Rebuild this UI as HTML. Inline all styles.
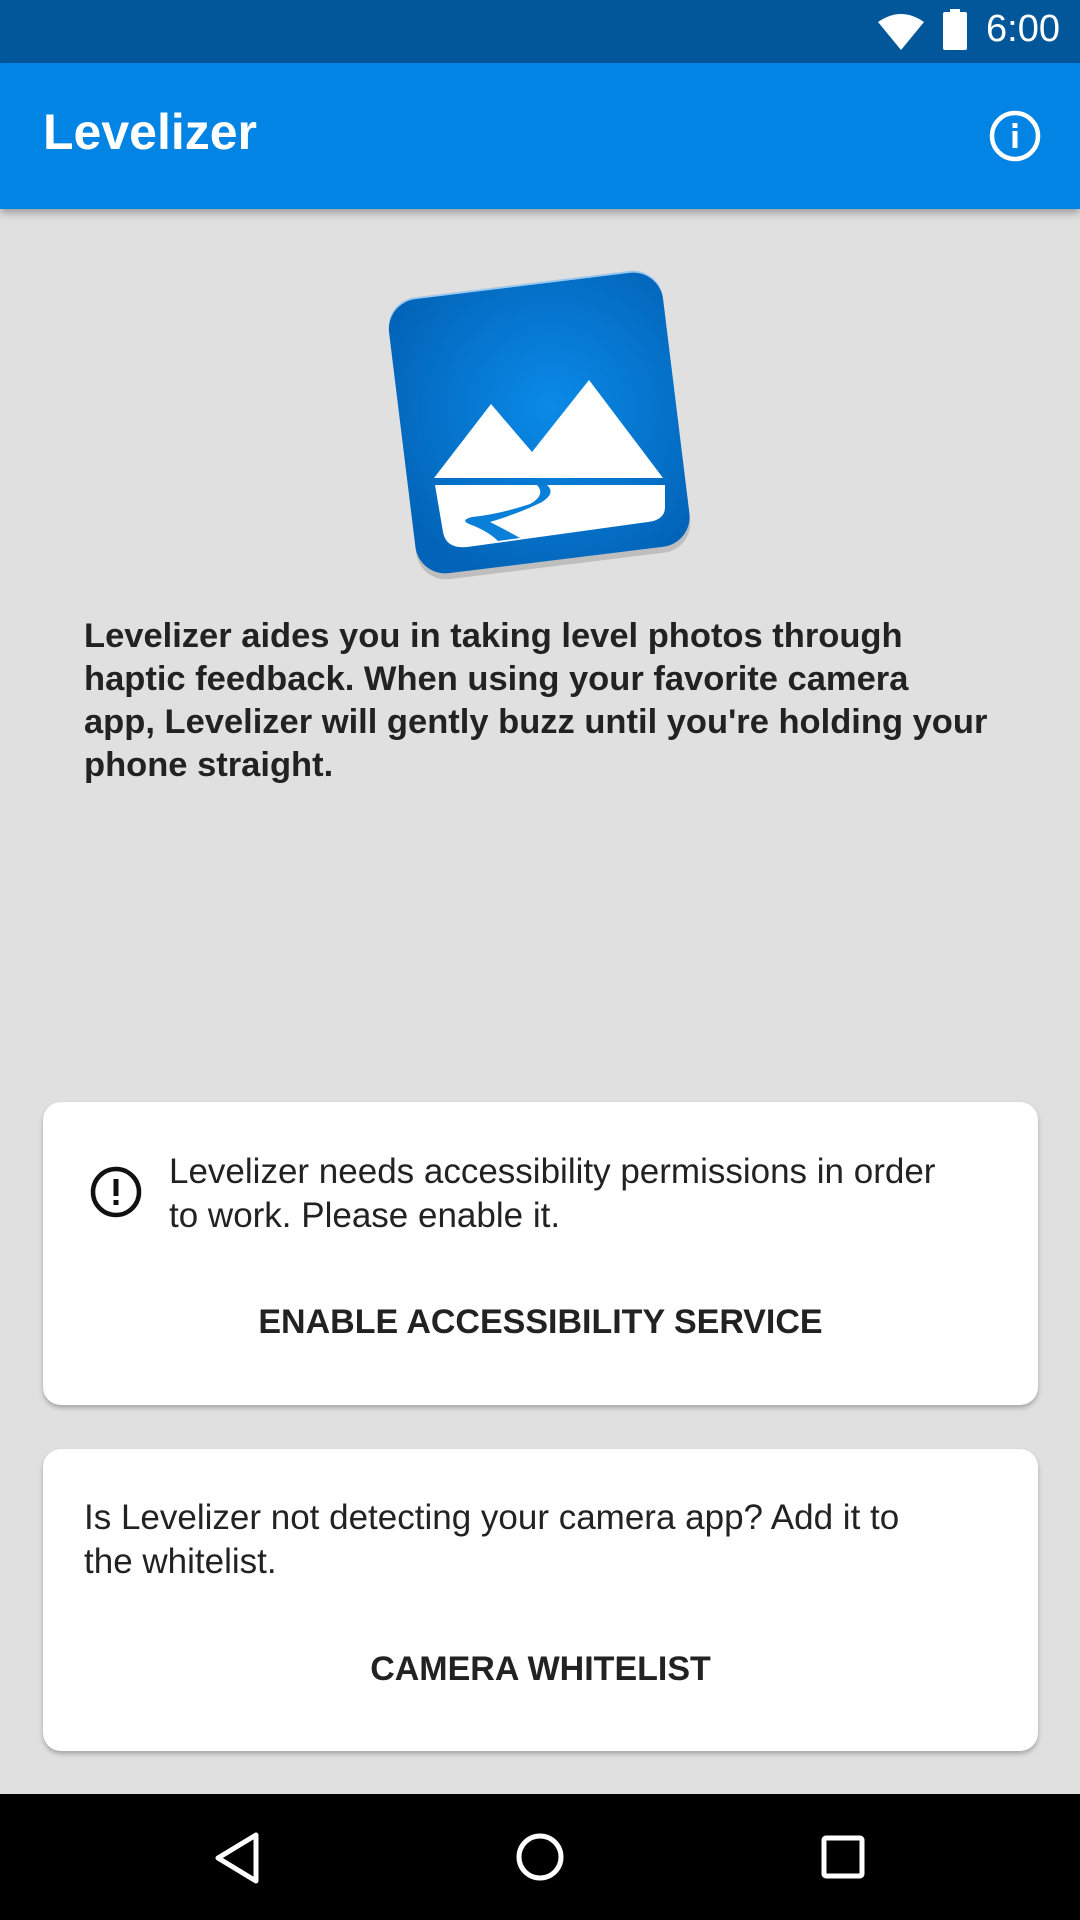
<!DOCTYPE html>
<html><head><meta charset="utf-8"><style>
body{margin:0;width:1080px;height:1920px;background:#e0e0e0;position:relative;overflow:hidden;font-family:"Liberation Sans",sans-serif;}
.status{position:absolute;left:0;top:0;width:1080px;height:63px;background:#02579b;}
.appbar{position:absolute;left:0;top:63px;width:1080px;height:146px;background:#0284e4;box-shadow:0 4px 8px rgba(0,0,0,.3);}
.title{position:absolute;left:43px;top:40px;font-size:50px;font-weight:bold;color:#fff;}
.desc{position:absolute;left:84px;top:615px;width:1000px;font-size:34.5px;line-height:43px;font-weight:bold;color:#222;white-space:nowrap;}
.card{position:absolute;left:43px;width:995px;background:#fff;border-radius:18px;box-shadow:0 3px 5px rgba(0,0,0,.25);}
.ct{position:absolute;font-size:35px;line-height:44px;color:#222;white-space:nowrap;}
.btn{position:absolute;left:0;width:995px;text-align:center;font-size:34px;font-weight:bold;color:#222;}
.nav{position:absolute;left:0;top:1794px;width:1080px;height:126px;background:#000;}
</style></head><body>
<div class="status">
<svg style="position:absolute;left:876px;top:12px" width="50" height="38" viewBox="0 0 50 38"><path d="M2 10 Q25 -6 48 10 L25 38 Z" fill="#fff"/></svg>
<div style="position:absolute;left:943px;top:12px;width:24px;height:38px;background:#fff;border-radius:2px"></div>
<div style="position:absolute;left:950px;top:9px;width:10px;height:5px;background:#fff"></div>
<div style="position:absolute;left:986px;top:8px;font-size:38px;color:#fff">6:00</div>
</div>
<div class="appbar"><div class="title">Levelizer</div>
<svg style="position:absolute;left:988px;top:46px" width="54" height="54" viewBox="0 0 54 54"><circle cx="27" cy="27" r="23" fill="none" stroke="#fff" stroke-width="4.5"/><rect x="24.5" y="22" width="5" height="17" fill="#fff"/><rect x="24.5" y="14" width="5" height="5" fill="#fff"/></svg>
</div>
<svg style="position:absolute;left:370px;top:250px" width="340" height="340" viewBox="0 0 340 340">
<defs><radialGradient id="g" cx="0.55" cy="0.45" r="0.65"><stop offset="0" stop-color="#0a8ae8"/><stop offset="1" stop-color="#0264b8"/></radialGradient></defs>
<g transform="rotate(-7 169 171)">
<rect x="31" y="41" width="276" height="276" rx="30" fill="rgba(0,0,0,.15)"/>
<rect x="31" y="33" width="276" height="276" rx="30" fill="#9cc8ee"/>
<rect x="31" y="35" width="276" height="276" rx="30" fill="url(#g)"/>
</g>
<path d="M64 228 L121 154 L162 202 L219 130 L293 228 Z" fill="#fff"/>
<path d="M65 235 L295 235 L295 257 Q295 270 278 272 L97 297 Q76 299 73 282 Z" fill="#fff"/>
<path d="M167 235 Q176 245 160 254 Q130 264 102 267 Q90 270 99 274 Q118 281 128 291 L150 288 Q134 279 120 272 Q150 263 172 252 Q186 243 177 235 Z" fill="#0a7fd8"/>
</svg>
<div class="desc">Levelizer aides you in taking level photos through<br>haptic feedback. When using your favorite camera<br>app, Levelizer will gently buzz until you're holding your<br>phone straight.</div>
<div class="card" style="top:1102px;height:303px">
<svg style="position:absolute;left:45px;top:62px" width="56" height="56" viewBox="0 0 56 56"><circle cx="28" cy="28" r="23" fill="none" stroke="#111" stroke-width="4.5"/><rect x="25.5" y="15" width="5" height="17" fill="#111"/><rect x="25.5" y="36" width="5" height="5" fill="#111"/></svg>
<div class="ct" style="left:126px;top:48px">Levelizer needs accessibility permissions in order<br>to work. Please enable it.</div>
<div class="btn" style="top:201px">ENABLE ACCESSIBILITY SERVICE</div>
</div>
<div class="card" style="top:1449px;height:302px">
<div class="ct" style="left:41px;top:47px">Is Levelizer not detecting your camera app? Add it to<br>the whitelist.</div>
<div class="btn" style="top:201px">CAMERA WHITELIST</div>
</div>
<div class="nav">
<svg style="position:absolute;left:212px;top:37px" width="50" height="54" viewBox="0 0 50 54"><path d="M44 4 L6 27 L44 50 Z" fill="none" stroke="#fff" stroke-width="5" stroke-linejoin="round"/></svg>
<svg style="position:absolute;left:514px;top:37px" width="52" height="52" viewBox="0 0 52 52"><circle cx="26" cy="26" r="21" fill="none" stroke="#fff" stroke-width="5"/></svg>
<svg style="position:absolute;left:820px;top:40px" width="46" height="46" viewBox="0 0 46 46"><rect x="4" y="4" width="38" height="38" rx="2" fill="none" stroke="#fff" stroke-width="5"/></svg>
</div>
</body></html>
